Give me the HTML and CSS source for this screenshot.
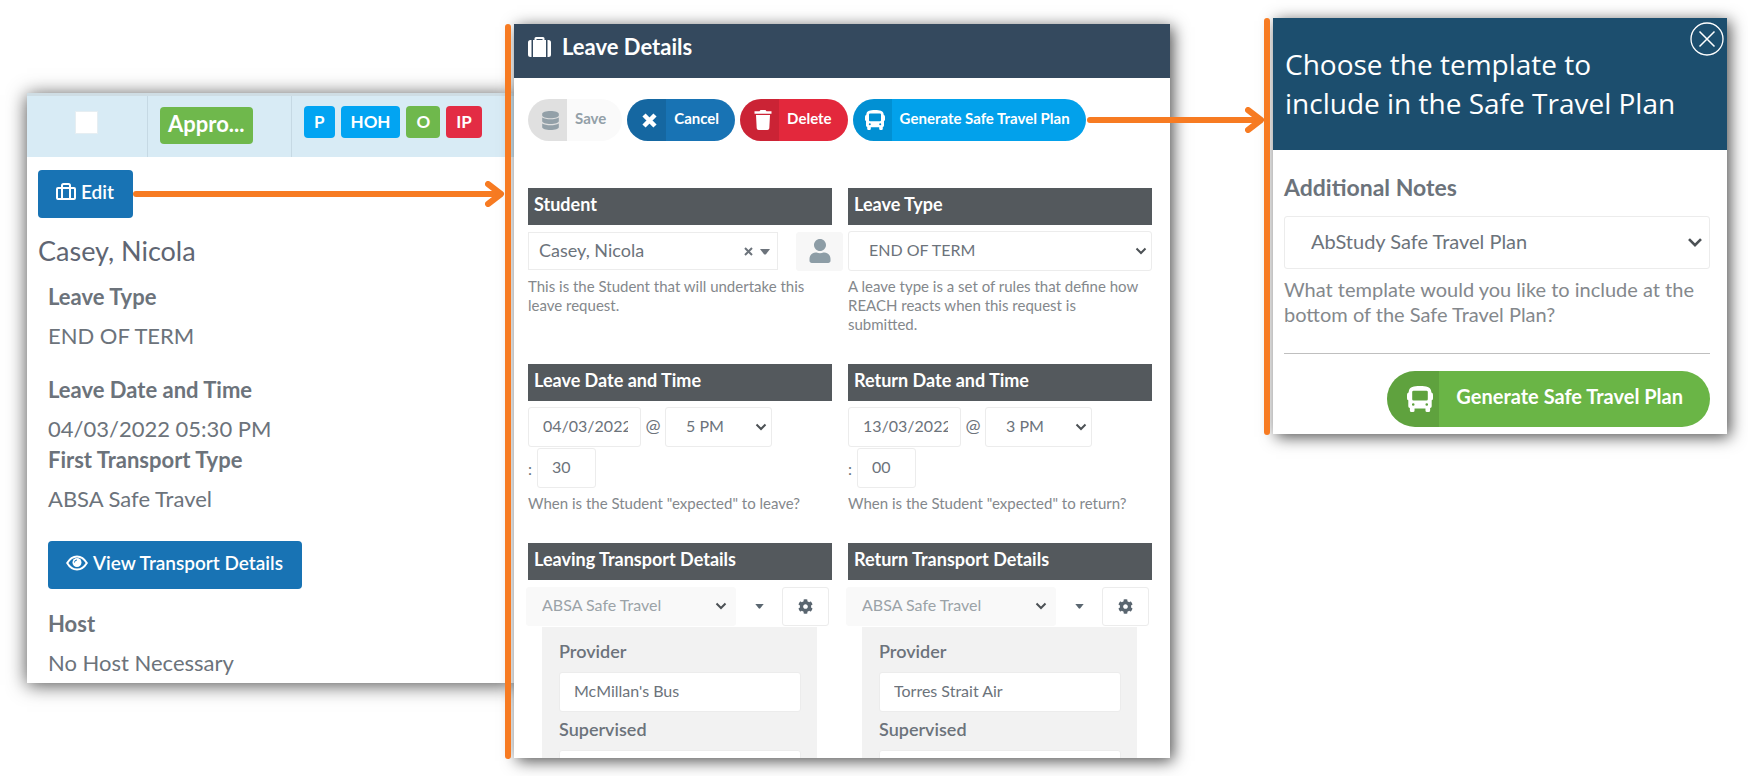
FILE: index.html
```html
<!DOCTYPE html>
<html lang="en">
<head>
    <meta charset="utf-8">
    <title>Safe Travel Plan</title>
    <link rel="stylesheet" href="styles.css">
</head>
<body>
    <!-- shared icons -->
    <svg class="sprite" aria-hidden="true">
        <symbol id="bus" viewBox="0 0 20 20">
            <path fill-rule="evenodd" d="M10 0C5 0 2.200 .8 1.500 3.500L1.200 5Q0 5.300 0 6.700V9.500Q0 10.900 1 11V15.500Q1 16.600 2.200 17V18.800Q2.200 20 3.400 20H4.600Q5.800 20 5.800 18.800V17.300H14.200V18.800Q14.200 20 15.400 20H16.600Q17.800 20 17.800 18.800V17Q19 16.600 19 15.500V11Q20 10.900 20 9.500V6.700Q20 5.300 18.800 5L18.500 3.500C17.800 .8 15 0 10 0ZM5 3.600H15Q16 3.600 16 4.600V10.200Q16 11.200 15 11.200H5Q4 11.200 4 10.200V4.600Q4 3.600 5 3.600ZM4.800 13.200A1 1 0 1 1 4.800 15.200A1 1 0 1 1 4.800 13.200ZM15.200 13.200A1 1 0 1 1 15.200 15.200A1 1 0 1 1 15.200 13.200Z"/>
        </symbol>
        <symbol id="chevron" viewBox="0 0 12 8">
            <path d="M1.500 1.500L6 6L10.500 1.500" fill="none" stroke="currentColor" stroke-width="2"/>
        </symbol>
        <symbol id="caret" viewBox="0 0 10 6">
            <path d="M0 0H10L6 5.200Q5 6 4 5.200Z"/>
        </symbol>
        <symbol id="head" viewBox="0 0 20 26">
            <path d="M3 3L16 13L3 23" fill="none" stroke="currentColor" stroke-width="6" stroke-linecap="round" stroke-linejoin="round"/>
        </symbol>
        <symbol id="cog" viewBox="0 0 512 512">
            <path d="M487.4 315.7l-42.6-24.6c4.300-23.200 4.300-47 0-70.200l42.600-24.600c4.900-2.800 7.100-8.600 5.500-14-11.100-35.600-30-67.800-54.700-94.600-3.800-4.100-10-5.100-14.800-2.300L380.800 110c-17.900-15.400-38.500-27.300-60.800-35.100V25.800c0-5.600-3.900-10.500-9.400-11.700-36.700-8.200-74.300-7.800-109.200 0-5.500 1.200-9.400 6.100-9.400 11.700V75c-22.200 7.900-42.800 19.800-60.800 35.100L88.700 85.500c-4.900-2.800-11-1.900-14.800 2.300-24.700 26.700-43.600 58.900-54.700 94.600-1.700 5.400.6 11.200 5.500 14L67.300 221c-4.300 23.200-4.300 47 0 70.200l-42.600 24.600c-4.900 2.800-7.100 8.600-5.500 14 11.100 35.600 30 67.800 54.700 94.600 3.800 4.100 10 5.100 14.800 2.300l42.600-24.600c17.900 15.400 38.500 27.300 60.800 35.100v49.200c0 5.600 3.900 10.500 9.400 11.700 36.700 8.200 74.300 7.800 109.200 0 5.500-1.200 9.400-6.100 9.400-11.700v-49.200c22.200-7.900 42.800-19.800 60.800-35.100l42.600 24.600c4.900 2.800 11 1.900 14.800-2.300 24.700-26.700 43.600-58.900 54.700-94.600 1.500-5.500-.7-11.300-5.600-14.100zM256 336c-44.100 0-80-35.900-80-80s35.900-80 80-80 80 35.900 80 80-35.900 80-80 80z"/>
        </symbol>
    </svg>

    <main class="board">
        <section class="card request">
            <div class="request-row">
                <div class="cell cell-check"><input type="checkbox" class="tick" aria-label="Select request"></div>
                <div class="cell cell-status"><span class="status">Appro...</span></div>
                <div class="cell cell-tags">
                    <span class="tag blue">P</span>
                    <span class="tag blue">HOH</span>
                    <span class="tag green">O</span>
                    <span class="tag red">IP</span>
                </div>
            </div>
            <div class="request-body">
                <div class="edit-row">
                    <button type="button" class="btn">
                        <svg width="20" height="18" viewBox="0 0 20 18" fill="none" stroke="currentColor" stroke-width="2"><rect x="1" y="5" width="18" height="11" rx="1"/><path d="M6 16V2.500Q6 1 7.500 1H12.500Q14 1 14 2.500V16"/></svg>
                        Edit
                    </button>
                    <div class="arrow"><svg width="20" height="26"><use href="#head"/></svg></div>
                </div>
                <h2 class="student-name">Casey, Nicola</h2>
                <div class="details">
                    <h3>Leave Type</h3>
                    <p class="spaced">END OF TERM</p>
                    <h3>Leave Date and Time</h3>
                    <p>04/03/2022 05:30 PM</p>
                    <h3>First Transport Type</h3>
                    <p>ABSA Safe Travel</p>
                    <button type="button" class="btn view">
                        <svg width="22" height="16" viewBox="0 0 22 16"><path d="M1.200 8Q5 1.500 11 1.500T20.800 8Q17 14.500 11 14.500T1.200 8Z" fill="none" stroke="currentColor" stroke-width="2"/><circle cx="11" cy="7.500" r="4.500" fill="currentColor"/><path d="M8.500 7.500Q8.500 5 11 5" fill="none" stroke="#1873b4" stroke-width="1"/></svg>
                        View Transport Details
                    </button>
                    <h3>Host</h3>
                    <p>No Host Necessary</p>
                </div>
            </div>
        </section>

        <section class="card marked leave">
            <header class="leave-header">
                <svg width="23" height="20" viewBox="0 0 23 20" fill="#fff"><path d="M3.500 3V20H2.500Q0 20 0 17.500V5.500Q0 3 2.500 3ZM19.500 3H20.500Q23 3 23 5.500V17.500Q23 20 20.500 20H19.500Z"/><path fill-rule="evenodd" d="M5 20V3H6.500V1.500Q6.500 0 8 0H15Q16.500 0 16.500 1.500V3H18V20ZM8.500 2V3H14.500V2Z"/></svg>
                <h2>Leave Details</h2>
            </header>
            <div class="leave-body">
                <div class="actions">
                    <button type="button" class="pill save" disabled>
                        <span class="pill-icon"><svg width="17" height="19" viewBox="0 0 448 512" fill="currentColor"><path d="M448 73.143v45.714C448 159.143 347.667 192 224 192S0 159.143 0 118.857V73.143C0 32.857 100.333 0 224 0s224 32.857 224 73.143zM448 176v102.857C448 319.143 347.667 352 224 352S0 319.143 0 278.857V176c48.125 33.143 136.208 48.572 224 48.572S399.874 209.143 448 176zm0 160v102.857C448 479.143 347.667 512 224 512S0 479.143 0 438.857V336c48.125 33.143 136.208 48.572 224 48.572S399.874 369.143 448 336z"/></svg></span>
                        <span class="pill-text">Save</span>
                    </button>
                    <button type="button" class="pill cancel">
                        <span class="pill-icon"><svg width="15" height="15" viewBox="0 0 15 15"><path d="M2 2L13 13M13 2L2 13" stroke="#fff" stroke-width="4.500"/></svg></span>
                        <span class="pill-text">Cancel</span>
                    </button>
                    <button type="button" class="pill delete">
                        <span class="pill-icon"><svg width="18" height="20" viewBox="0 0 18 20" fill="#fff"><path d="M.5 1.200H5.500L6.500 0H11.500L12.500 1.200H17.500V3.700H.5ZM2 5H16L15.300 18.200Q15.200 20 13.400 20H4.600Q2.800 20 2.700 18.200Z"/></svg></span>
                        <span class="pill-text">Delete</span>
                    </button>
                    <button type="button" class="pill generate">
                        <span class="pill-icon"><svg width="20" height="20" fill="#fff"><use href="#bus"/></svg></span>
                        <span class="pill-text">Generate Safe Travel Plan</span>
                    </button>
                    <div class="arrow to-template"><svg width="20" height="26"><use href="#head"/></svg></div>
                </div>

                <form class="fields">
                    <div class="field">
                        <label class="field-title" for="student">Student</label>
                        <div class="line student-line">
                            <span class="select student">
                                <select id="student"><option>Casey, Nicola</option></select>
                                <svg class="clear" width="9" height="9" viewBox="0 0 9 9"><path d="M1 1L8 8M8 1L1 8" stroke="currentColor" stroke-width="2"/></svg>
                                <svg class="mark" width="10" height="6" fill="currentColor"><use href="#caret"/></svg>
                            </span>
                            <button type="button" class="square profile" aria-label="Student profile">
                                <svg width="22" height="24" viewBox="0 0 448 512" fill="#8d9da6"><path d="M224 256c70.700 0 128-57.300 128-128S294.700 0 224 0 96 57.300 96 128s57.300 128 128 128zm89.600 32h-16.700c-22.200 10.200-46.900 16-72.900 16s-50.600-5.800-72.900-16h-16.700C60.200 288 0 348.200 0 422.400V464c0 26.500 21.500 48 48 48h352c26.500 0 48-21.500 48-48v-41.600c0-74.200-60.200-134.400-134.400-134.400z"/></svg>
                            </button>
                        </div>
                        <p class="help">This is the Student that will undertake this leave request.</p>
                    </div>
                    <div class="field">
                        <label class="field-title" for="leaveType">Leave Type</label>
                        <div class="line">
                            <span class="select wide">
                                <select id="leaveType"><option>END OF TERM</option></select>
                                <svg class="mark" width="12" height="8"><use href="#chevron"/></svg>
                            </span>
                        </div>
                        <p class="help">A leave type is a set of rules that define how REACH reacts when this request is submitted.</p>
                    </div>

                    <div class="field">
                        <label class="field-title" for="leaveDate">Leave Date and Time</label>
                        <div class="line">
                            <input type="text" class="date" id="leaveDate" value="04/03/2022">
                            <span class="at">@</span>
                            <span class="select hour">
                                <select aria-label="Leave hour"><option>5 PM</option></select>
                                <svg class="mark" width="12" height="8"><use href="#chevron"/></svg>
                            </span>
                        </div>
                        <div class="line minutes-line">
                            <span class="colon">:</span>
                            <input type="text" class="minutes" value="30" aria-label="Leave minutes">
                        </div>
                        <p class="help">When is the Student "expected" to leave?</p>
                    </div>
                    <div class="field">
                        <label class="field-title" for="returnDate">Return Date and Time</label>
                        <div class="line">
                            <input type="text" class="date" id="returnDate" value="13/03/2022">
                            <span class="at">@</span>
                            <span class="select hour">
                                <select aria-label="Return hour"><option>3 PM</option></select>
                                <svg class="mark" width="12" height="8"><use href="#chevron"/></svg>
                            </span>
                        </div>
                        <div class="line minutes-line">
                            <span class="colon">:</span>
                            <input type="text" class="minutes" value="00" aria-label="Return minutes">
                        </div>
                        <p class="help">When is the Student "expected" to return?</p>
                    </div>

                    <div class="field">
                        <label class="field-title" for="leavingTransport">Leaving Transport Details</label>
                        <div class="line transport-line">
                            <span class="select transport">
                                <select id="leavingTransport" disabled><option>ABSA Safe Travel</option></select>
                                <svg class="mark" width="12" height="8"><use href="#chevron"/></svg>
                            </span>
                            <button type="button" class="more" aria-label="More"><svg width="9" height="5"><use href="#caret"/></svg></button>
                            <button type="button" class="square" aria-label="Settings"><svg width="15" height="15" fill="#5a6670"><use href="#cog"/></svg></button>
                        </div>
                        <div class="panel">
                            <label for="leavingProvider">Provider</label>
                            <input type="text" id="leavingProvider" value="McMillan's Bus">
                            <label for="leavingSupervised">Supervised</label>
                            <div class="peek"><input type="text" id="leavingSupervised"></div>
                        </div>
                    </div>
                    <div class="field">
                        <label class="field-title" for="returnTransport">Return Transport Details</label>
                        <div class="line transport-line">
                            <span class="select transport">
                                <select id="returnTransport" disabled><option>ABSA Safe Travel</option></select>
                                <svg class="mark" width="12" height="8"><use href="#chevron"/></svg>
                            </span>
                            <button type="button" class="more" aria-label="More"><svg width="9" height="5"><use href="#caret"/></svg></button>
                            <button type="button" class="square" aria-label="Settings"><svg width="15" height="15" fill="#5a6670"><use href="#cog"/></svg></button>
                        </div>
                        <div class="panel">
                            <label for="returnProvider">Provider</label>
                            <input type="text" id="returnProvider" value="Torres Strait Air">
                            <label for="returnSupervised">Supervised</label>
                            <div class="peek"><input type="text" id="returnSupervised"></div>
                        </div>
                    </div>
                </form>
            </div>
        </section>

        <section class="card marked template">
            <header class="template-header">
                <h2>Choose the template to include in the Safe Travel Plan</h2>
                <button type="button" class="close" aria-label="Close">
                    <svg width="34" height="34" viewBox="0 0 34 34" fill="none" stroke="#fff"><circle cx="17" cy="17" r="16" stroke-width="1.300"/><path d="M9.500 9.500L24.500 24.500M24.500 9.500L9.500 24.500" stroke-width="1.500"/></svg>
                </button>
            </header>
            <form class="template-body">
                <label for="notes">Additional Notes</label>
                <span class="select notes">
                    <select id="notes"><option>AbStudy Safe Travel Plan</option></select>
                    <svg class="mark" width="16" height="11"><use href="#chevron"/></svg>
                </span>
                <p class="help">What template would you like to include at the bottom of the Safe Travel Plan?</p>
                <hr>
                <button type="button" class="pill large">
                    <span class="pill-icon"><svg width="26" height="26" fill="#fff"><use href="#bus"/></svg></span>
                    <span class="pill-text">Generate Safe Travel Plan</span>
                </button>
            </form>
        </section>
    </main>
</body>
</html>
```

FILE: styles.css
```css
* {
    box-sizing: border-box;
}
body {
    margin: 0;
    background-color: #fff;
    color: #6c737b;
    font-family: Lato, "Liberation Sans", sans-serif;
    font-size: 16px;
}
h2, h3, p {
    margin: 0;
}
svg {
    display: block;
    flex: none;
}
button, input, select {
    margin: 0;
    font-family: inherit;
    color: inherit;
}
button {
    border: 0;
    padding: 0;
    cursor: pointer;
}
.sprite {
    position: absolute;
    width: 0;
    height: 0;
}
.board {
    display: flex;
    align-items: flex-start;
    padding: 18px 21px 18px 27px;
}
.card {
    position: relative;
    min-width: 0;
    background-color: #fff;
    box-shadow: 3px 3px 15px rgba(0, 0, 0, 0.7);
}
/* orange marker down the left of a card */
.marked::before {
    content: "";
    position: absolute;
    left: -9px;
    top: 0;
    bottom: -1px;
    width: 6px;
    border-radius: 3px;
    background-color: #f77b22;
}

/* arrows */
.arrow {
    flex: 1;
    display: flex;
    align-items: center;
    color: #f77b22;
}
.arrow::before {
    content: "";
    flex: 1;
    height: 6px;
    margin-right: -18px;
    border-radius: 3px;
    background-color: #f77b22;
}

/* leave request */
.request {
    flex: 487 1 0;
    margin-top: 75px;
    box-shadow: 0 2px 18px rgba(0, 0, 0, 0.7);
}
.request-row {
    display: flex;
    height: 64px;
    border-top: 3px solid #cfdde4;
    background-color: #d8ebf5;
}
.cell {
    border-right: 1px solid #c6d9e4;
}
.cell:last-child {
    border-right: 0;
}
.cell-check {
    width: 121px;
    padding: 15px 0 0 48px;
}
.cell-status {
    width: 144px;
    padding: 11px 12px;
}
.cell-tags {
    flex: 1;
    display: flex;
    align-items: flex-start;
    gap: 6px;
    padding: 10px 12px;
}
.tick {
    display: block;
    appearance: none;
    width: 23px;
    height: 23px;
    border: 1px solid #e6eef2;
    background-color: #fff;
}
.status {
    display: inline-block;
    padding: 0 9px 3px 8px;
    border-radius: 4px;
    background-color: #6fb84c;
    color: #fff;
    font-size: 22px;
    font-weight: bold;
    line-height: 34px;
}
.tag {
    padding: 0 10px;
    border-radius: 4px;
    color: #fff;
    font-size: 17px;
    font-weight: bold;
    line-height: 32px;
}
.blue {
    background-color: #02a4f2;
}
.green {
    background-color: #6fb84c;
}
.red {
    background-color: #e32c44;
}
.request-body {
    padding: 13px 9px 5px 11px;
}
.edit-row {
    display: flex;
}
.btn {
    display: flex;
    align-items: center;
    gap: 5px;
    height: 48px;
    padding: 0 19px 5px 18px;
    border-radius: 4px;
    background-color: #1873b4;
    color: #fff;
    font-size: 19px;
    font-weight: 600;
}
.student-name {
    margin: 13px 0 11px;
    font-size: 27px;
    font-weight: normal;
    line-height: 40px;
    color: #5f6673;
}
.details {
    padding-left: 10px;
    font-size: 22px;
    line-height: 30px;
}
.details h3 {
    margin-bottom: 9px;
    font-size: 22px;
    font-weight: bold;
}
.details p {
    margin-bottom: 1px;
}
.details p.spaced {
    margin-bottom: 24px;
}
.details p:last-child {
    margin-bottom: 0;
}
.view {
    margin: 27px 0 20px;
}

/* leave details */
.leave {
    flex: 656 1 0;
    margin-top: 6px;
}
.leave-header {
    display: flex;
    align-items: center;
    gap: 11px;
    height: 54px;
    padding: 0 14px 8px;
    background-color: #34495e;
    color: #fff;
}
.leave-header h2 {
    font-size: 22px;
    line-height: 26px;
}
.leave-body {
    padding: 21px 18px 0 14px;
}
.actions {
    display: flex;
    align-items: center;
    gap: 5px;
    margin-bottom: 47px;
}
.to-template {
    margin: 0 -113px 0 -4px;
}
.pill {
    display: flex;
    height: 42px;
    overflow: hidden;
    border-radius: 21px;
    color: #fff;
    font-size: 15px;
    font-weight: bold;
    white-space: nowrap;
}
.pill-icon {
    display: flex;
    align-items: center;
    justify-content: center;
    width: 39px;
    height: 100%;
    padding-left: 6px;
    background-color: rgba(0, 0, 0, 0.1);
}
.pill-text {
    padding: 0 16px 0 8px;
    line-height: 39px;
}
.save {
    background-color: #fafafa;
    color: #93a0a8;
}
.cancel {
    background-color: #1873b4;
}
.delete {
    background-color: #e3283c;
}
.generate {
    background-color: #02a1eb;
}
.fields {
    display: grid;
    grid-template-columns: 1fr 1fr;
    gap: 30px 16px;
}
.field {
    min-width: 0;
}
.field-title {
    display: block;
    margin-bottom: 6px;
    padding: 0 6px 4px;
    background-color: #54595d;
    color: #fff;
    font-size: 18px;
    font-weight: bold;
    line-height: 33px;
}
.line {
    display: flex;
    align-items: center;
    height: 40px;
}
.minutes-line {
    margin-top: 1px;
}
.help {
    margin-top: 6px;
    padding-right: 8px;
    font-size: 15px;
    line-height: 19px;
    color: #84888c;
}
.field input, .select select {
    width: 100%;
    height: 40px;
    padding: 0 12px 3px 14px;
    border: 1px solid #ececec;
    border-radius: 3px;
    background-color: #fff;
    font-size: 16px;
}
.select {
    position: relative;
    display: block;
}
.select select {
    appearance: none;
    padding-left: 20px;
    opacity: 1;
}
.select .mark, .select .clear {
    position: absolute;
    top: 50%;
    right: 5px;
    margin-top: -4px;
    color: #4c5155;
    pointer-events: none;
}
.student-line {
    margin-right: -11px;
    justify-content: space-between;
}
.student {
    flex: 0 1 250px;
}
.student select {
    height: 38px;
    padding-left: 10px;
    border-radius: 0;
    font-size: 18px;
}
.student .mark {
    right: 8px;
    margin-top: -2px;
    color: #6c737b;
}
.select .clear {
    right: 25px;
    color: #6c737b;
}
.wide {
    flex: 1;
}
.square {
    display: flex;
    align-items: center;
    justify-content: center;
    width: 47px;
    height: 39px;
    border: 1px solid #ececec;
    border-radius: 3px;
    background-color: #fff;
}
.profile {
    border-color: #f7f7f7;
    background-color: #f7f7f7;
}
.field .date {
    width: 113px;
}
.at {
    width: 24px;
    padding-bottom: 4px;
    font-size: 18px;
    text-align: center;
}
.hour {
    width: 107px;
}
.colon {
    width: 9px;
}
.field .minutes {
    width: 59px;
}
.transport-line {
    margin: 0 3px 0 -2px;
}
.transport {
    flex: 1;
}
.transport select {
    height: 39px;
    padding-left: 15px;
    border-color: #f9f9f9;
    background-color: #f9f9f9;
    color: #9ba3a8;
}
.transport .mark {
    right: 9px;
}
.more {
    display: flex;
    justify-content: center;
    width: 46px;
    background: none;
}
.more svg {
    fill: #5a6670;
}
.panel {
    margin: 1px 15px 0 14px;
    padding: 12px 16px 0 17px;
    background-color: #f2f2f2;
}
.panel label {
    display: block;
    margin-bottom: 9px;
    font-size: 18px;
    font-weight: 600;
    line-height: 24px;
}
.panel input {
    display: block;
    margin-bottom: 5px;
}
.peek {
    height: 8px;
    overflow: hidden;
}

/* template chooser */
.template {
    flex: 454 1 0;
    margin-left: 103px;
}
.template-header {
    position: relative;
    padding: 27px 40px 27px 12px;
    background-color: #1c4e6e;
    color: #fff;
}
.template-header h2 {
    font-family: "Open Sans", "Noto Sans", sans-serif;
    font-size: 28px;
    font-weight: normal;
    line-height: 39px;
}
.close {
    position: absolute;
    top: 4px;
    right: 3px;
    background: none;
}
.template-body {
    padding: 22px 17px 7px 11px;
}
.template-body label {
    display: block;
    margin-bottom: 14px;
    font-size: 23px;
    font-weight: bold;
    line-height: 30px;
}
.notes select {
    height: 53px;
    padding: 0 26px 4px;
    font-size: 20px;
}
.notes .mark {
    right: 7px;
    margin-top: -6px;
}
.template-body .help {
    margin-top: 8px;
    padding-right: 0;
    font-size: 20px;
    line-height: 25px;
}
hr {
    margin: 26px 0 17px;
    border: 0;
    border-top: 1px solid #bfbfbf;
}
.large {
    height: 56px;
    margin-left: auto;
    border-radius: 28px;
    background-color: #6ab546;
    font-size: 20px;
}
.large .pill-icon {
    width: 52px;
    padding-left: 14px;
}
.large .pill-text {
    padding: 0 27px 0 17px;
    line-height: 50px;
}
```
